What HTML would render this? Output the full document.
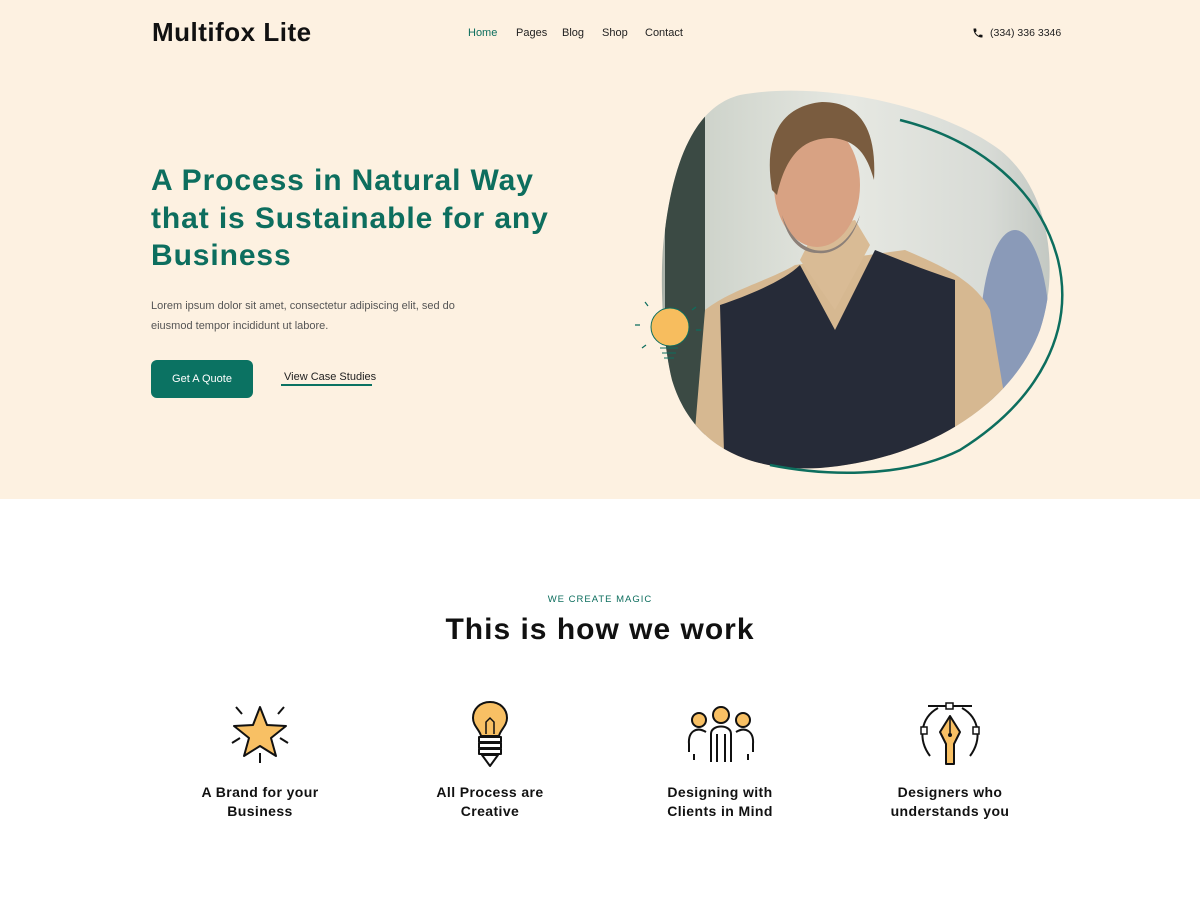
<!DOCTYPE html>
<html><head><meta charset="utf-8"><style>
*{margin:0;padding:0;box-sizing:border-box}
body{width:1200px;height:900px;background:#fff;font-family:"Liberation Sans",sans-serif;position:relative;overflow:hidden}
.hero{position:absolute;left:0;top:0;width:1200px;height:499px;background:#fdf1e1}
.logo{position:absolute;left:152px;top:17px;font-size:26px;font-weight:bold;color:#111;letter-spacing:0.5px}
.nav{position:absolute;top:27px;font-size:11px;color:#222}
.phone{position:absolute;top:27px;font-size:10.5px;color:#222}
h1{position:absolute;left:151px;top:162px;font-size:30px;line-height:37.5px;color:#0d6e5e;font-weight:bold;letter-spacing:0.9px}
.lead{position:absolute;left:151px;top:297px;font-size:11px;line-height:19.5px;color:#555}
.btn{position:absolute;left:151px;top:360px;width:102px;height:38px;background:#0b7262;border-radius:6px;color:#fff;font-size:11px;text-align:center;line-height:38px}
.link{position:absolute;left:284px;top:371px;font-size:11px;color:#222}
.uline{position:absolute;left:281px;top:384px;width:91px;height:2px;background:#0b7262}
.sub{position:absolute;left:0;width:1200px;top:594px;text-align:center;font-size:9.5px;letter-spacing:1px;color:#0d6e5e}
h2{position:absolute;left:0;width:1200px;top:613px;text-align:center;font-size:30px;color:#111;font-weight:bold;letter-spacing:1px}
.feat{position:absolute;top:783px;width:200px;text-align:center;font-size:14px;line-height:18.5px;font-weight:bold;color:#111;letter-spacing:0.4px}
svg.ic{position:absolute}
</style></head><body>
<div class="hero"></div>
<div class="logo">Multifox Lite</div>
<div class="nav" style="left:468px;color:#0d6e5e">Home</div>
<div class="nav" style="left:516px">Pages</div>
<div class="nav" style="left:562px">Blog</div>
<div class="nav" style="left:602px">Shop</div>
<div class="nav" style="left:645px">Contact</div>
<svg class="ic" style="left:972px;top:27px" width="12" height="12" viewBox="0 0 24 24"><path fill="#111" d="M6.6 10.8c1.4 2.8 3.8 5.1 6.6 6.6l2.2-2.2c.3-.3.7-.4 1-.2 1.1.4 2.3.6 3.6.6.6 0 1 .4 1 1V20c0 .6-.4 1-1 1C10.6 21 3 13.4 3 4c0-.6.4-1 1-1h3.5c.6 0 1 .4 1 1 0 1.3.2 2.5.6 3.6.1.3 0 .7-.2 1z"/></svg>
<div class="phone" style="left:990px">(334) 336 3346</div>
<h1>A Process in Natural Way<br>that is Sustainable for any<br>Business</h1>
<div class="lead">Lorem ipsum dolor sit amet, consectetur adipiscing elit, sed do<br>eiusmod tempor incididunt ut labore.</div>
<div class="btn">Get A Quote</div>
<div class="link">View Case Studies</div>
<div class="uline"></div>

<svg class="ic" style="left:620px;top:80px" width="460" height="410" viewBox="0 0 460 410">
<defs>
<clipPath id="b"><path d="M120 15 C200 0 320 25 380 70 C430 110 440 190 420 250 C390 330 300 380 200 388 C120 392 70 360 52 300 C40 250 40 180 45 150 C55 70 80 25 120 15Z"/></clipPath>
<linearGradient id="bg" x1="0" x2="1"><stop offset="0" stop-color="#3e4a44"/><stop offset="0.12" stop-color="#c9cfc6"/><stop offset="0.5" stop-color="#e6e8e2"/><stop offset="0.8" stop-color="#d8dbd6"/><stop offset="1" stop-color="#b9bfb9"/></linearGradient>
</defs>
<g clip-path="url(#b)">
<rect width="460" height="410" fill="url(#bg)"/>
<rect x="45" y="0" width="40" height="410" fill="#3b4a44"/>
<ellipse cx="395" cy="260" rx="35" ry="110" fill="#8a9ab8"/>
<path d="M70 410 L85 230 C110 210 150 200 175 185 L285 170 C320 185 355 200 370 230 L400 410Z" fill="#d6b891"/>
<path d="M105 410 L100 225 C130 215 165 200 180 185 L215 250 L255 170 C280 180 305 190 335 200 L335 410Z" fill="#262b38"/>
<path d="M180 180 L215 230 L250 165 L235 140 L195 150Z" fill="#d9bb95"/>
<ellipse cx="197" cy="105" rx="43" ry="62" fill="#d8a283"/>
<path d="M152 110 C142 50 167 25 202 22 C237 22 257 45 254 100 C247 75 237 60 212 58 C187 58 167 70 157 115Z" fill="#7a5c3f"/>
<path d="M162 135 C177 180 222 185 240 135 C232 165 212 175 197 173 C182 173 167 160 162 135Z" fill="#8c8078"/>
</g>
<path d="M280 40 C360 60 420 110 438 180 C455 250 420 320 340 370 C280 400 200 395 150 385" fill="none" stroke="#0d6e5e" stroke-width="2.5"/>
<circle cx="50" cy="247" r="19" fill="#f7bd5e" stroke="#0d6e5e" stroke-width="1"/>
<path d="M40 268 h18 M42 273 h14 M44 278 h10" stroke="#0d6e5e" stroke-width="1"/>
<path d="M20 245 h-5 M28 226 l-3-4 M72 230 l4-3 M76 250 h5 M26 265 l-4 3" stroke="#0d6e5e" stroke-width="1.2"/>
</svg>

<div class="sub">WE CREATE MAGIC</div>
<h2>This is how we work</h2>

<svg class="ic" style="left:228px;top:703px" width="64" height="62" viewBox="0 0 64 62"><path d="M32 4 L39 22 L58 23 L43 35 L48 53 L32 43 L16 53 L21 35 L6 23 L25 22Z" fill="#f8c064" stroke="#111" stroke-width="2" stroke-linejoin="round"/><path d="M32 50 V60 M4 40 l8-5 M60 40 l-8-5 M8 4 l6 7 M56 4 l-6 7" stroke="#111" stroke-width="2"/></svg>
<svg class="ic" style="left:470px;top:700px" width="40" height="70" viewBox="0 0 40 70"><path d="M20 2 C10 2 3 9 3 18 C3 26 10 30 11 36 H29 C30 30 37 26 37 18 C37 9 30 2 20 2Z" fill="#f8c064" stroke="#111" stroke-width="2"/><path d="M16 34 V22 L20 18 L24 22 V34" fill="none" stroke="#111" stroke-width="1.5"/><path d="M9 37 h22 v5 h-22z M9 43 h22 v5 h-22z M9 49 h22 v5 h-22z M12 55 h16 l-8 11z" fill="#fff" stroke="#111" stroke-width="2" stroke-linejoin="round"/></svg>
<svg class="ic" style="left:686px;top:704px" width="70" height="60" viewBox="0 0 70 60"><circle cx="13" cy="16" r="7" fill="#f8c064" stroke="#111" stroke-width="2"/><circle cx="57" cy="16" r="7" fill="#f8c064" stroke="#111" stroke-width="2"/><circle cx="35" cy="11" r="8" fill="#f8c064" stroke="#111" stroke-width="2"/><path d="M25 58 V30 C25 20 45 20 45 30 V58 M31 58 V30 M39 58 V30 M20 28 C10 22 2 28 3 40 V48 M8 56 V50 M50 28 C60 22 68 28 67 40 V48 M62 56 V50" fill="none" stroke="#111" stroke-width="2"/></svg>
<svg class="ic" style="left:918px;top:700px" width="64" height="70" viewBox="0 0 64 70"><path d="M10 6 H54" stroke="#111" stroke-width="2"/><rect x="28" y="3" width="7" height="6" fill="#fff" stroke="#111" stroke-width="1.5"/><path d="M12 56 C0 40 2 18 20 8 M52 56 C64 40 62 18 44 8" fill="none" stroke="#111" stroke-width="2"/><rect x="3" y="27" width="6" height="7" fill="#fff" stroke="#111" stroke-width="1.5"/><rect x="55" y="27" width="6" height="7" fill="#fff" stroke="#111" stroke-width="1.5"/><path d="M32 16 L42 32 L36 44 V64 H28 V44 L22 32Z" fill="#f8c064" stroke="#111" stroke-width="2" stroke-linejoin="round"/><path d="M32 16 V34" stroke="#111" stroke-width="1.5"/><circle cx="32" cy="35" r="2" fill="#111"/></svg>

<div class="feat" style="left:160px">A Brand for your<br>Business</div>
<div class="feat" style="left:390px">All Process are<br>Creative</div>
<div class="feat" style="left:620px">Designing with<br>Clients in Mind</div>
<div class="feat" style="left:850px">Designers who<br>understands you</div>
</body></html>
